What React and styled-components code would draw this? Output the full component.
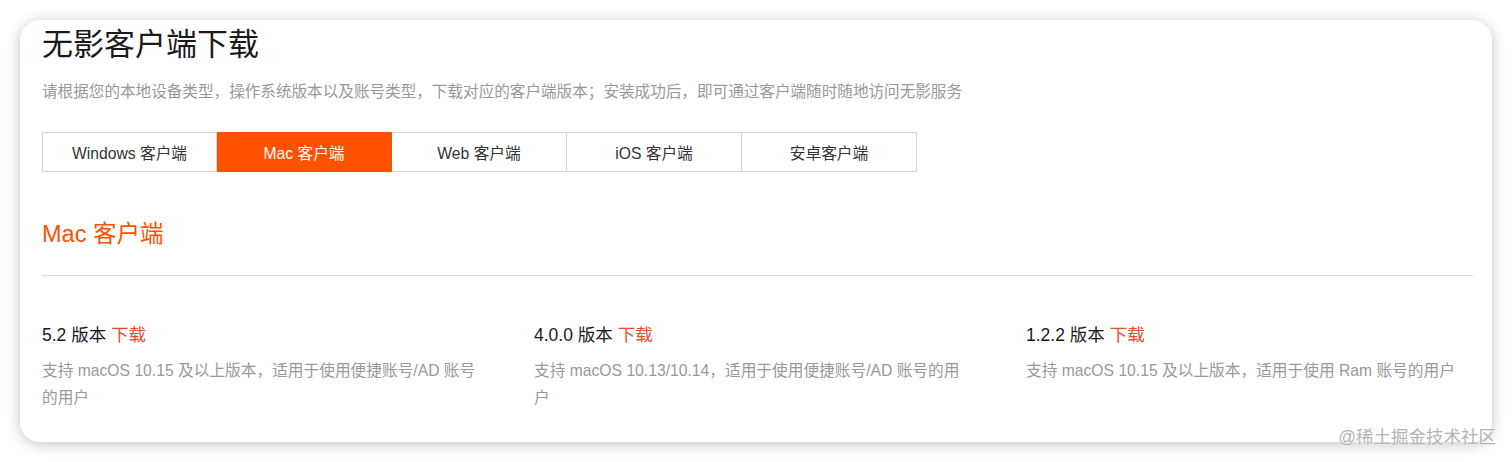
import React, { useState } from 'react';
import styled, { createGlobalStyle } from 'styled-components';

const GlobalStyle = createGlobalStyle`
  html, body {
    margin: 0;
    padding: 0;
    background: #fff;
  }
  body {
    font-family: "Liberation Sans", "Noto Sans CJK SC", sans-serif;
  }
`;

const tabs = ['Windows 客户端', 'Mac 客户端', 'Web 客户端', 'iOS 客户端', '安卓客户端'];

const versions = [
  { name: '5.2 版本', desc: '支持 macOS 10.15 及以上版本，适用于使用便捷账号/AD 账号的用户' },
  { name: '4.0.0 版本', desc: '支持 macOS 10.13/10.14，适用于使用便捷账号/AD 账号的用户' },
  { name: '1.2.2 版本', desc: '支持 macOS 10.15 及以上版本，适用于使用 Ram 账号的用户' },
];

export default function App() {
  const [active, setActive] = useState(1);

  return (
    <Page>
      <GlobalStyle />
      <Card>
        <Title>无影客户端下载</Title>
        <Subtitle>
          请根据您的本地设备类型，操作系统版本以及账号类型，下载对应的客户端版本；安装成功后，即可通过客户端随时随地访问无影服务
        </Subtitle>
        <TabBar>
          {tabs.map((t, i) => (
            <Tab key={t} $active={i === active} onClick={() => setActive(i)}>
              {t}
            </Tab>
          ))}
        </TabBar>
        <SectionTitle>{tabs[active]}</SectionTitle>
        <Divider />
        <VersionGrid>
          {versions.map((v) => (
            <Version key={v.name}>
              <VersionName>
                {v.name} <DownloadLink href="#">下载</DownloadLink>
              </VersionName>
              <VersionDesc>{v.desc}</VersionDesc>
            </Version>
          ))}
        </VersionGrid>
      </Card>
      <Watermark>@稀土掘金技术社区</Watermark>
    </Page>
  );
}

const Page = styled.div`
  position: relative;
  width: 1512px;
  height: 462px;
  padding: 20px;
  box-sizing: border-box;
  overflow: hidden;
`;

const Card = styled.div`
  box-sizing: border-box;
  width: 1472px;
  height: 422px;
  background: #fff;
  border-radius: 20px;
  box-shadow: 0 2px 14px rgba(0, 0, 0, 0.24);
  padding: 5px 19px 0 22px;
  display: flex;
  flex-direction: column;
`;

const Title = styled.h1`
  margin: 0;
  font-size: 31px;
  line-height: 40px;
  font-weight: 400;
  color: #1a1a1a;
`;

const Subtitle = styled.p`
  margin: 15px 0 0;
  font-size: 15.6px;
  line-height: 24px;
  color: #999;
  white-space: nowrap;
`;

const TabBar = styled.div`
  display: flex;
  margin-top: 28px;
`;

const Tab = styled.div`
  box-sizing: border-box;
  width: 175px;
  height: 40px;
  display: flex;
  align-items: center;
  justify-content: center;
  font-size: 15.7px;
  color: ${(p) => (p.$active ? '#fff' : '#333')};
  background: ${(p) => (p.$active ? '#ff5200' : '#fff')};
  border: 1px solid ${(p) => (p.$active ? '#ff5200' : '#d6d6d6')};
  & + & {
    border-left: none;
  }
  cursor: pointer;
`;

const SectionTitle = styled.h2`
  margin: 46px 0 0;
  font-size: 23.5px;
  line-height: 32px;
  font-weight: 400;
  color: #ff5200;
`;

const Divider = styled.hr`
  margin: 25px 0 0;
  border: none;
  border-top: 1px solid #dcdcdc;
`;

const VersionGrid = styled.div`
  display: grid;
  grid-template-columns: repeat(3, 440px);
  column-gap: 52px;
  margin-top: 47px;
`;

const Version = styled.div`
  display: flex;
  flex-direction: column;
`;

const VersionName = styled.div`
  font-size: 17.5px;
  line-height: 24px;
  color: #1a1a1a;
`;

const DownloadLink = styled.a`
  color: #ea4a2c;
  text-decoration: none;
`;

const VersionDesc = styled.div`
  margin-top: 10px;
  font-size: 15.7px;
  line-height: 27px;
  color: #999;
`;

const Watermark = styled.div`
  position: absolute;
  right: 16px;
  bottom: 13px;
  font-size: 17.5px;
  line-height: 24px;
  color: #b4b4b4;
  text-shadow: 0 0 2px #fff;
`;
